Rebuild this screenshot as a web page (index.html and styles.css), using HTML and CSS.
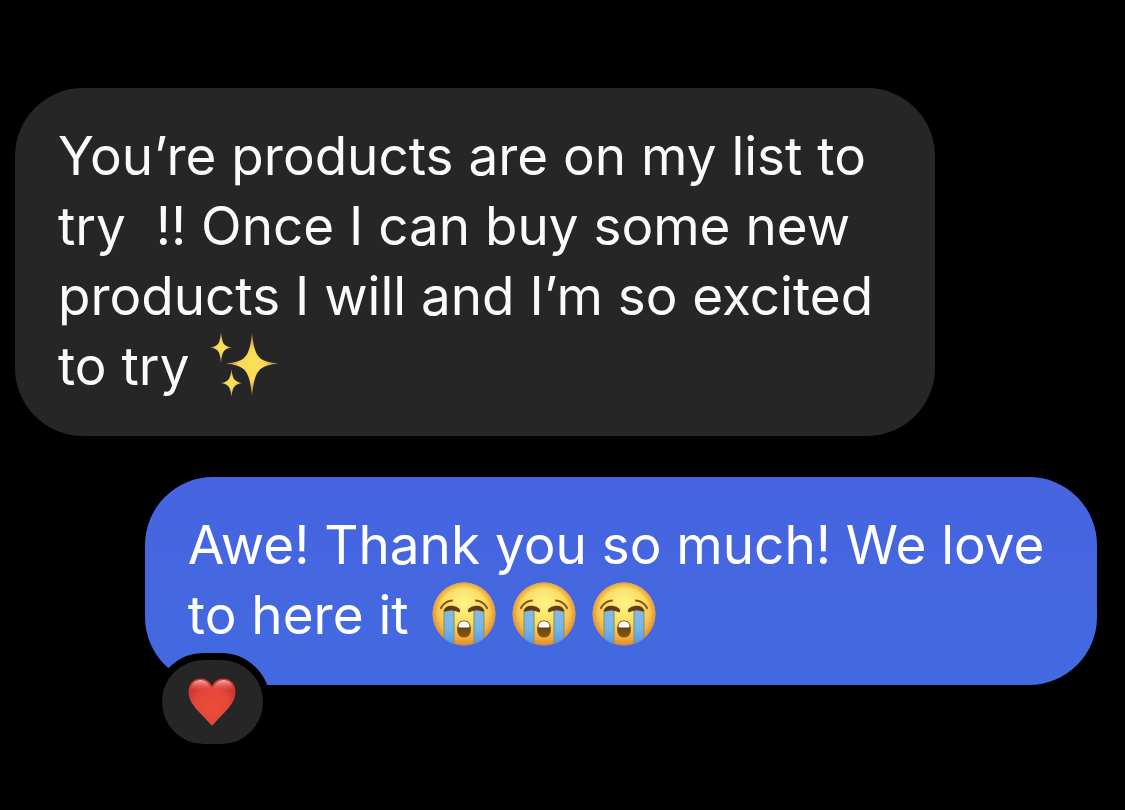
FILE: index.html
```html
<!DOCTYPE html>
<html lang="en">
<head>
    <meta charset="UTF-8">
    <meta name="viewport" content="width=device-width, initial-scale=1">
    <title>Messages</title>
    <link rel="stylesheet" href="styles.css">
</head>
<body>
<svg class="defs" aria-hidden="true">
    <defs>
        <radialGradient id="star" cx="50%" cy="50%" r="50%">
            <stop offset="0" stop-color="#fbe34f"/>
            <stop offset="0.5" stop-color="#f8d65c"/>
            <stop offset="1" stop-color="#b0703f"/>
        </radialGradient>
        <radialGradient id="face" cx="50%" cy="34%" r="66%">
            <stop offset="0" stop-color="#fff58a"/>
            <stop offset="0.5" stop-color="#fbdc5c"/>
            <stop offset="0.8" stop-color="#f3b347"/>
            <stop offset="1" stop-color="#df8c35"/>
        </radialGradient>
        <radialGradient id="rim" cx="50%" cy="50%" r="50%">
            <stop offset="0.8" stop-color="#e89a38" stop-opacity="0"/>
            <stop offset="1" stop-color="#d98a38" stop-opacity="0.7"/>
        </radialGradient>
        <linearGradient id="tear" x1="0" y1="0" x2="0" y2="1">
            <stop offset="0" stop-color="#7fb9e4"/>
            <stop offset="0.5" stop-color="#74b7ea"/>
            <stop offset="1" stop-color="#4b97dc"/>
        </linearGradient>
        <linearGradient id="mouth" x1="0" y1="0" x2="0" y2="1">
            <stop offset="0" stop-color="#5a3009"/>
            <stop offset="1" stop-color="#89551c"/>
        </linearGradient>
        <radialGradient id="heart-fill" cx="50%" cy="60%" r="60%">
            <stop offset="0" stop-color="#ea4d36"/>
            <stop offset="0.6" stop-color="#e5473a"/>
            <stop offset="1" stop-color="#cf3330"/>
        </radialGradient>
        <linearGradient id="shine" x1="0" y1="0" x2="0" y2="1">
            <stop offset="0" stop-color="#ffd3cb" stop-opacity="0.8"/>
            <stop offset="0.8" stop-color="#ee6a58" stop-opacity="0"/>
        </linearGradient>
        <clipPath id="face-clip"><circle cx="32" cy="32" r="31.5"/></clipPath>
        <symbol id="crying" viewBox="0 0 64 64">
            <circle cx="32" cy="32" r="31.5" fill="url(#face)"/>
            <circle cx="32" cy="32" r="31.5" fill="url(#rim)"/>
            <g clip-path="url(#face-clip)">
                <path d="M12 27h10v37H12zM42 27h10v37H42z" fill="url(#tear)"/>
                <path d="M12 27v37M22 27v37M42 27v37M52 27v37" fill="none" stroke="#8d8a62" stroke-width="1"/>
            </g>
            <path d="M12 28.500C12.500 25.500 15 23.800 19 23.800C24 23.800 27.800 26 28.200 28.800C28.200 30.300 27 30.500 25.500 29.700C22 28 17 28 13.800 29.500C12.500 30 11.800 29.500 12 28.500Z" fill="#643b0b"/>
            <path d="M52 28.500C51.500 25.500 49 23.800 45 23.800C40 23.800 36.200 26 35.800 28.800C35.800 30.300 37 30.500 38.500 29.700C42 28 47 28 50.200 29.500C51.500 30 52.200 29.500 52 28.500Z" fill="#643b0b"/>
            <path d="M9 26C11 22 14.500 19 20 18.500M55 26C53 22 49.500 19 44 18.500" fill="none" stroke="#8a5510" stroke-width="2.200" stroke-linecap="round"/>
            <path d="M32 38.500C36.500 38.500 38.800 41.500 38.800 47C38.800 52.500 36.500 55.500 32 55.500C27.500 55.500 25.200 52.500 25.200 47C25.200 41.500 27.500 38.500 32 38.500Z" fill="url(#mouth)"/>
            <path d="M32 39.300C35.500 39.300 37 41 37.500 43.500C37.700 45 37 45.500 36 45.500H28C27 45.500 26.300 45 26.500 43.500C27 41 28.500 39.300 32 39.300Z" fill="#fffdf5"/>
        </symbol>
    </defs>
</svg>
<main class="chat">
    <div class="bubble received">
        You’re products are on my list to try &nbsp;!! Once I can buy some new products I will and I’m so excited to&nbsp;try
        <span class="emojis">
            <svg class="emoji" viewBox="0 0 64 64" role="img" aria-label="sparkles">
                <g fill="url(#star)">
                    <path d="M40 0C41.500 14 43.500 21 48 25C52 28.500 58 29.500 66 30.500C58 31.500 52 33 48 36.500C43.500 41 41.500 48 40 63C38.500 48 36.500 41 32 36.500C28 33 22 31.500 14 30.500C22 29.500 28 28.500 32 25C36.500 21 38.500 14 40 0Z"/>
                    <path d="M9-1C9.900 7 10.700 10 12.700 11.800C14.500 13.300 16.500 14 20 14.500C16.500 15 14.500 15.800 12.700 17.300C10.700 19.200 9.900 22 9 30C8.100 22 7.300 19.200 5.300 17.300C3.500 15.800 1.500 15-2 14.500C1.500 14 3.500 13.300 5.300 11.800C7.300 10 8.100 7 9-1Z"/>
                    <path d="M19.500 36C20.400 43 21.200 45.500 23.200 47.200C25 48.800 27 49.500 30.500 50C27 50.500 25 51.200 23.200 52.800C21.200 54.500 20.400 57 19.500 64C18.600 57 17.800 54.500 15.800 52.800C14 51.200 12 50.500 8.500 50C12 49.500 14 48.800 15.800 47.200C17.800 45.500 18.600 43 19.500 36Z"/>
                </g>
            </svg>
        </span>
    </div>
    <div class="bubble sent">
        Awe! Thank you so much! We love to here it
        <span class="emojis">
            <svg class="emoji" role="img" aria-label="loudly crying face"><use href="#crying"/></svg>
            <svg class="emoji" role="img" aria-label="loudly crying face"><use href="#crying"/></svg>
            <svg class="emoji" role="img" aria-label="loudly crying face"><use href="#crying"/></svg>
        </span>
        <span class="reaction">
            <svg class="heart" viewBox="0 0 48 48" role="img" aria-label="red heart">
                <path d="M24 47.500C21.500 45.500 18 41 12.500 35.500C5 28 0.500 21.500 0.500 13.500C0.500 6 5.500 0.500 12.500 0.500C18 0.500 22 3.500 24 8.500C26 3.500 30 0.500 35.500 0.500C42.500 0.500 47.500 6 47.500 13.500C47.500 21.500 43 28 35.500 35.500C30 41 26.500 45.500 24 47.500Z" fill="url(#heart-fill)"/>
                <path d="M2.500 12C3 5.500 7 2 12.500 2C18 2 21.500 5.500 22.500 11C20 15 5 17 2.500 12ZM45.500 12C45 5.500 41 2 35.500 2C30 2 26.500 5.500 25.500 11C28 15 43 17 45.500 12Z" fill="url(#shine)"/>
            </svg>
        </span>
    </div>
</main>
</body>
</html>
```

FILE: styles.css
```css
*{box-sizing:border-box;}
body{margin:0;background:#000;color:#fff;font:53px/70px Inter,"Liberation Sans",sans-serif;}
.defs{position:absolute;width:0;height:0;}
.chat{display:flex;flex-direction:column;gap:41px;padding:88px 28px 64px 15px;}
.bubble{position:relative;padding:33px 43px 35px;border-radius:68px;}
.received{align-self:flex-start;max-width:85%;background:#262626;color:#fafafa;}
.sent{align-self:flex-end;max-width:88%;background:linear-gradient(#4764e0,#426ae0);}
.emojis{display:inline-flex;gap:16px;margin-left:8px;vertical-align:-12px;}
.emoji{width:64px;height:64px;overflow:visible;}
/* the black border cuts the pill out of the bubble */
.reaction{position:absolute;left:10px;bottom:-66px;display:flex;align-items:center;justify-content:center;width:115px;height:98px;background:#262626;border:7px solid #000;border-radius:50px;}
.heart{width:48px;height:48px;}
```
